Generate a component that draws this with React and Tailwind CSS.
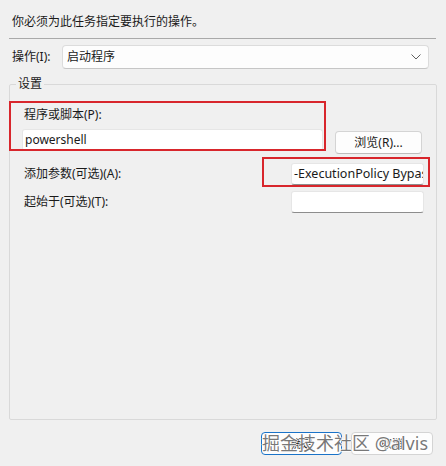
import React from "react";

const FONT = {
  fontFamily:
    '"Noto Sans", "Noto Sans CJK SC", "Microsoft YaHei", sans-serif',
};

function TextBox({ className = "", value = "" }) {
  return (
    <div
      className={
        "h-[22px] bg-white border border-[#e6e6e6] border-b-[#8d8d8d] rounded-[3px] overflow-hidden whitespace-nowrap flex items-center pl-[2px] text-[#1a1a1a] " +
        className
      }
    >
      {value}
    </div>
  );
}

export default function App() {
  return (
    <div
      className="relative w-[446px] h-[466px] bg-[#f0f0f0] text-[#1a1a1a] text-[12px] leading-[16px] overflow-hidden"
      style={FONT}
    >
      <div className="pt-[14px] pl-[12px] h-[30px]">你必须为此任务指定要执行的操作。</div>
      <div className="mt-[8px] mx-[9px] border-t border-[#a9a9a9] w-[427px]" />

      <div className="mt-[6px] flex items-center h-[24px]">
        <div className="pl-[12px] w-[62px]">操作(I):</div>
        <div className="w-[367px] h-[24px] bg-[#fdfdfd] border border-[#dcdcdc] border-b-[#c6c6c6] rounded-[4px] flex items-center justify-between pl-[4px] pr-[7px]">
          <span>启动程序</span>
          <svg width="10" height="6" viewBox="0 0 10 6" fill="none">
            <path d="M0.5 0.5 L5 5 L9.5 0.5" stroke="#5f5f5f" strokeWidth="1" />
          </svg>
        </div>
      </div>

      <fieldset className="mt-[7px] mx-[9px] h-[344px] border border-[#d9d9d9] rounded-[2px]">
        <legend className="ml-[6px] px-[2px] h-[16px] leading-[16px]">设置</legend>
        <div className="px-[12px]">
          <div className="mt-[15px] pl-[2px] h-[16px]">程序或脚本(P):</div>
          <div className="mt-[6px] flex items-start">
            <TextBox className="w-[301px] text-[12px]" value="powershell" />
            <div className="ml-[12px] mt-[2px] w-[87px] h-[23px] bg-[#fdfdfd] border border-[#d4d4d4] border-b-[#bdbdbd] rounded-[4px] flex items-center justify-center">
              浏览(R)...
            </div>
          </div>
          <div className="mt-[9px] flex items-center justify-between">
            <div className="pl-[2px]">添加参数(可选)(A):</div>
            <TextBox className="w-[133px] text-[12.5px]" value="-ExecutionPolicy Bypass" />
          </div>
          <div className="mt-[6px] flex items-center justify-between">
            <div className="pl-[2px]">起始于(可选)(T):</div>
            <TextBox className="w-[133px] text-[12px]" value="" />
          </div>
        </div>
      </fieldset>

      <div className="mt-[12px] flex justify-end pr-[13px] gap-[9px]">
        <div className="w-[81px] h-[23px] bg-[#fdfdfd] border-[1.5px] border-[#1a73c8] rounded-[4px] flex items-center justify-center text-[11px]">
          确定
        </div>
        <div className="w-[82px] h-[23px] bg-[#fdfdfd] border border-[#d4d4d4] rounded-[4px] flex items-center justify-center text-[11px]">
          取消
        </div>
      </div>

      {/* red annotation boxes */}
      <div className="absolute left-[9px] top-[101px] w-[317px] h-[50px] border-2 border-[#d8262c] pointer-events-none" />
      <div className="absolute left-[262px] top-[157px] w-[168px] h-[30px] border-2 border-[#d8262c] pointer-events-none" />

      {/* watermark */}
      <div
        className="absolute left-[262px] top-[431px] text-[18px] leading-[24px] text-[#606060]/85 whitespace-nowrap pointer-events-none"
        style={{
          textShadow:
            "0 0 1px #fff, 1px 0 0 rgba(255,255,255,0.8), -1px 0 0 rgba(255,255,255,0.8), 0 1px 0 rgba(255,255,255,0.8), 0 -1px 0 rgba(255,255,255,0.8)",
        }}
      >
        掘金技术社区 @alvis
      </div>
    </div>
  );
}
